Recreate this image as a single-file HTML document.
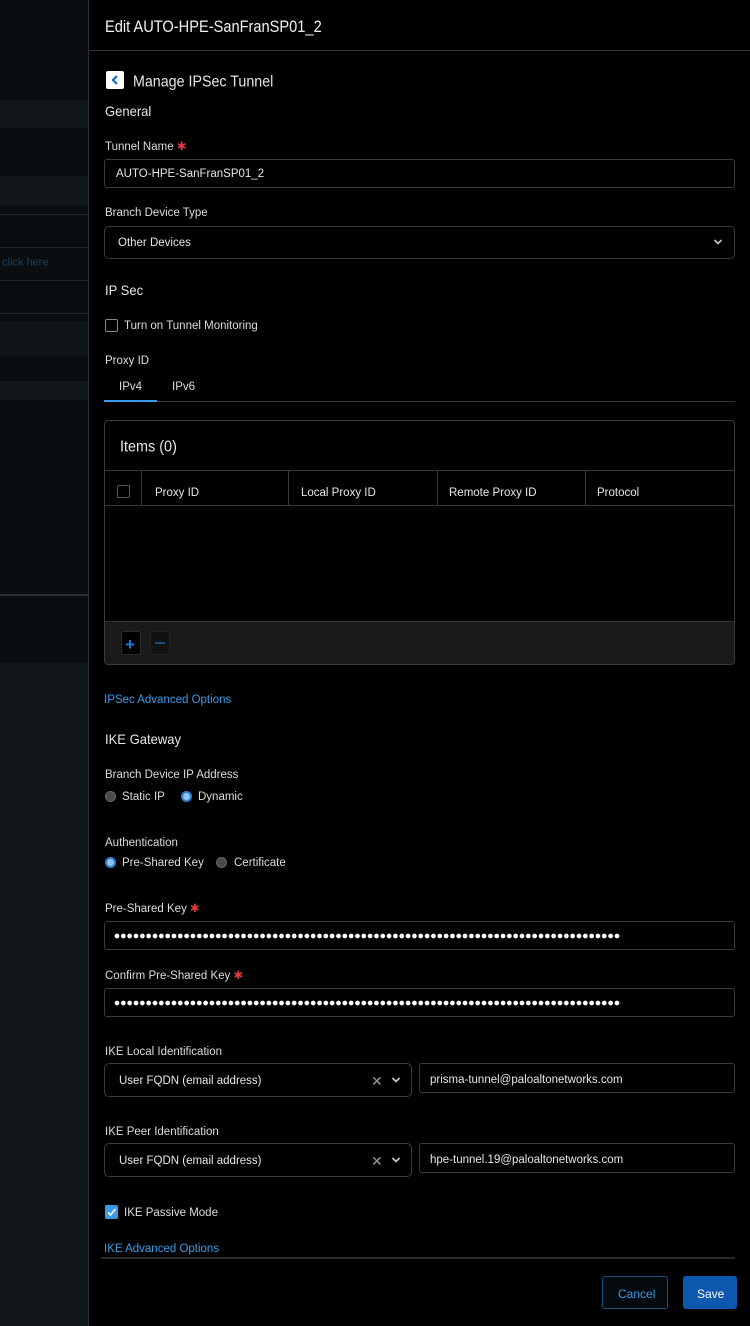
<!DOCTYPE html>
<html><head><meta charset="utf-8"><style>
*{margin:0;padding:0;box-sizing:border-box}
body{width:750px;height:1326px;background:#000;font-family:"Liberation Sans",sans-serif;color:#e6e6e6;position:relative;overflow:hidden}
.a{position:absolute}
.t{position:absolute;white-space:nowrap;line-height:1;transform:translateY(-42%);transform-origin:left center}
.lbl{font-size:11.5px;color:#dcdcdc}
.box{position:absolute;border:1px solid #3a3a3a;border-radius:3px;background:#000}
.band{position:absolute;left:0;width:88px}
.red{color:#e0383e}
.dots{position:absolute;height:6px;background:radial-gradient(circle at 3px 3px,#fff 2.1px,transparent 2.6px);background-size:6.33px 6px;background-repeat:repeat-x}
</style></head><body>
<!-- sidebar -->
<div class="band" style="top:0;height:1326px;background:#0a0e11"></div>
<div class="band" style="top:100px;height:28px;background:#12171a"></div>
<div class="band" style="top:176px;height:30px;background:#12171a"></div>
<div class="band" style="top:214px;height:1px;background:#1c2226"></div>
<div class="band" style="top:247px;height:1px;background:#1c2226"></div>
<div class="band" style="top:280px;height:1px;background:#1c2226"></div>
<div class="band" style="top:313px;height:1px;background:#1c2226"></div>
<div class="band" style="top:322px;height:34px;background:#101518"></div>
<div class="band" style="top:381px;height:19px;background:#12171a"></div>
<div class="band" style="top:594px;height:2px;background:#2a3034"></div>
<div class="band" style="top:663px;height:663px;background:#12171a"></div>
<div class="t" style="left:2px;top:262px;font-size:11px;color:#1d3f5c">click here</div>
<div class="a" style="left:88px;top:0;width:1px;height:1326px;background:#2a2f33"></div>

<!-- header -->
<div class="t" style="left:105px;top:25px;font-size:17px;color:#f2f2f2;transform:translateY(-42%) scaleX(.86)">Edit AUTO-HPE-SanFranSP01_2</div>
<div class="a" style="left:89px;top:50px;width:661px;height:1px;background:#333"></div>

<div class="a" style="left:106px;top:71px;width:18px;height:18px;background:#fff;border-radius:2px"></div>
<svg class="a" style="left:106px;top:71px" width="18" height="18"><path d="M11 5L7 9l4 4" stroke="#0a6fd6" stroke-width="2.2" fill="none"/></svg>
<div class="t" style="left:133px;top:81px;font-size:15.5px;transform:translateY(-42%) scaleX(.92)">Manage IPSec Tunnel</div>
<div class="t" style="left:105px;top:110px;font-size:14px;transform:translateY(-42%) scaleX(.93)">General</div>

<div class="t lbl" style="left:105px;top:147px">Tunnel Name <span class="red">✱</span></div>
<div class="box" style="left:104px;top:159px;width:631px;height:29px"></div>
<div class="t" style="left:116px;top:174px;font-size:11.5px">AUTO-HPE-SanFranSP01_2</div>

<div class="t lbl" style="left:105px;top:213px">Branch Device Type</div>
<div class="box" style="left:104px;top:226px;width:631px;height:33px;border-radius:5px"></div>
<div class="t" style="left:118px;top:243px;font-size:11.5px">Other Devices</div>
<svg class="a" style="left:713px;top:238px" width="10" height="8"><path d="M1.5 2l3.5 3.5L8.5 2" stroke="#ccc" stroke-width="1.6" fill="none"/></svg>

<div class="t" style="left:105px;top:289px;font-size:14px;transform:translateY(-42%) scaleX(.93)">IP Sec</div>
<div class="a" style="left:105px;top:319px;width:13px;height:13px;border:1px solid #888;border-radius:2px"></div>
<div class="t lbl" style="left:124px;top:326px">Turn on Tunnel Monitoring</div>

<div class="t lbl" style="left:105px;top:361px">Proxy ID</div>
<div class="t lbl" style="left:119px;top:387px">IPv4</div>
<div class="t lbl" style="left:172px;top:387px">IPv6</div>
<div class="a" style="left:104px;top:401px;width:631px;height:1px;background:#333"></div>
<div class="a" style="left:104px;top:400px;width:53px;height:2px;background:#3a9ae8"></div>

<!-- table -->
<div class="box" style="left:104px;top:420px;width:631px;height:245px;border-radius:4px;overflow:hidden">
  <div class="a" style="left:0;top:49px;width:100%;height:1px;background:#3a3a3a"></div>
  <div class="a" style="left:0;top:84px;width:100%;height:1px;background:#3a3a3a"></div>
  <div class="a" style="left:36px;top:49px;width:1px;height:36px;background:#3a3a3a"></div>
  <div class="a" style="left:183px;top:49px;width:1px;height:36px;background:#3a3a3a"></div>
  <div class="a" style="left:332px;top:49px;width:1px;height:36px;background:#3a3a3a"></div>
  <div class="a" style="left:480px;top:49px;width:1px;height:36px;background:#3a3a3a"></div>
  <div class="a" style="left:0;top:200px;width:100%;height:45px;background:#1a1a1a;border-top:1px solid #333"></div>
</div>
<div class="t" style="left:120px;top:446px;font-size:15.5px;transform:translateY(-42%) scaleX(.93)">Items (0)</div>
<div class="a" style="left:117px;top:485px;width:13px;height:13px;border:1px solid #555;border-radius:2px"></div>
<div class="t" style="left:155px;top:493px;font-size:11.5px">Proxy ID</div>
<div class="t" style="left:301px;top:493px;font-size:11.5px">Local Proxy ID</div>
<div class="t" style="left:449px;top:493px;font-size:11.5px">Remote Proxy ID</div>
<div class="t" style="left:597px;top:493px;font-size:11.5px">Protocol</div>
<div class="a" style="left:121px;top:631px;width:20px;height:24px;background:#000;border:1px solid #2a2a2a;border-radius:3px"></div>
<div class="t" style="left:125px;top:643px;font-size:17px;color:#1a7de0;font-weight:bold">+</div>
<div class="a" style="left:150px;top:631px;width:20px;height:24px;background:#111;border:1px solid #222;border-radius:3px"></div>
<div class="a" style="left:155px;top:642px;width:10px;height:2px;background:#1d4c7a"></div>

<div class="t" style="left:104px;top:700px;font-size:11.5px;color:#3b9be8">IPSec Advanced Options</div>
<div class="t" style="left:105px;top:738px;font-size:14px;transform:translateY(-42%) scaleX(.93)">IKE Gateway</div>

<div class="t lbl" style="left:105px;top:775px">Branch Device IP Address</div>
<div class="a" style="left:105px;top:791px;width:11px;height:11px;border-radius:50%;background:#4a4a4a;border:1px solid #666"></div>
<div class="t lbl" style="left:122px;top:797px">Static IP</div>
<div class="a" style="left:181px;top:791px;width:11px;height:11px;border-radius:50%;background:#8ec3f2;border:2px solid #2f7fd0"></div>
<div class="t lbl" style="left:198px;top:797px">Dynamic</div>

<div class="t lbl" style="left:105px;top:843px">Authentication</div>
<div class="a" style="left:105px;top:857px;width:11px;height:11px;border-radius:50%;background:#8ec3f2;border:2px solid #2f7fd0"></div>
<div class="t lbl" style="left:122px;top:863px">Pre-Shared Key</div>
<div class="a" style="left:216px;top:857px;width:11px;height:11px;border-radius:50%;background:#4a4a4a;border:1px solid #666"></div>
<div class="t lbl" style="left:234px;top:863px">Certificate</div>

<div class="t lbl" style="left:105px;top:909px">Pre-Shared Key <span class="red">✱</span></div>
<div class="box" style="left:104px;top:921px;width:631px;height:29px"></div>
<div class="dots" style="left:114px;top:933px;width:507px"></div>
<div class="t lbl" style="left:105px;top:976px">Confirm Pre-Shared Key <span class="red">✱</span></div>
<div class="box" style="left:104px;top:988px;width:631px;height:29px"></div>
<div class="dots" style="left:114px;top:1000px;width:507px"></div>

<div class="t lbl" style="left:105px;top:1052px">IKE Local Identification</div>
<div class="box" style="left:104px;top:1063px;width:308px;height:34px;border-radius:5px"></div>
<div class="t" style="left:119px;top:1081px;font-size:11.5px">User FQDN (email address)</div>
<div class="t" style="left:371px;top:1080px;font-size:14px;color:#999">✕</div>
<svg class="a" style="left:391px;top:1076px" width="10" height="8"><path d="M1.5 2l3.5 3.5L8.5 2" stroke="#ccc" stroke-width="1.6" fill="none"/></svg>
<div class="box" style="left:419px;top:1063px;width:316px;height:30px"></div>
<div class="t" style="left:430px;top:1080px;font-size:11.5px">prisma-tunnel@paloaltonetworks.com</div>

<div class="t lbl" style="left:105px;top:1132px">IKE Peer Identification</div>
<div class="box" style="left:104px;top:1143px;width:308px;height:34px;border-radius:5px"></div>
<div class="t" style="left:119px;top:1161px;font-size:11.5px">User FQDN (email address)</div>
<div class="t" style="left:371px;top:1160px;font-size:14px;color:#999">✕</div>
<svg class="a" style="left:391px;top:1156px" width="10" height="8"><path d="M1.5 2l3.5 3.5L8.5 2" stroke="#ccc" stroke-width="1.6" fill="none"/></svg>
<div class="box" style="left:419px;top:1143px;width:316px;height:30px"></div>
<div class="t" style="left:430px;top:1160px;font-size:11.5px">hpe-tunnel.19@paloaltonetworks.com</div>

<div class="a" style="left:105px;top:1205px;width:13px;height:14px;background:#3b9be8;border-radius:2px"></div>
<svg class="a" style="left:105px;top:1205px" width="13" height="14"><path d="M3 7.5l2.5 2.5L10.5 4" stroke="#fff" stroke-width="1.6" fill="none"/></svg>
<div class="t lbl" style="left:124px;top:1213px">IKE Passive Mode</div>

<div class="t" style="left:104px;top:1249px;font-size:11.5px;color:#3b9be8">IKE Advanced Options</div>
<div class="a" style="left:101px;top:1257px;width:634px;height:2px;background:#2a2a2a"></div>

<div class="a" style="left:602px;top:1276px;width:66px;height:33px;border:1px solid #1d4f80;border-radius:3px;background:#050a0f"></div>
<div class="t" style="left:618px;top:1293px;font-size:12px;color:#3b9be8">Cancel</div>
<div class="a" style="left:683px;top:1276px;width:54px;height:33px;border-radius:3px;background:#0d58ae"></div>
<div class="t" style="left:697px;top:1293px;font-size:12px;color:#fff">Save</div>
</body></html>
